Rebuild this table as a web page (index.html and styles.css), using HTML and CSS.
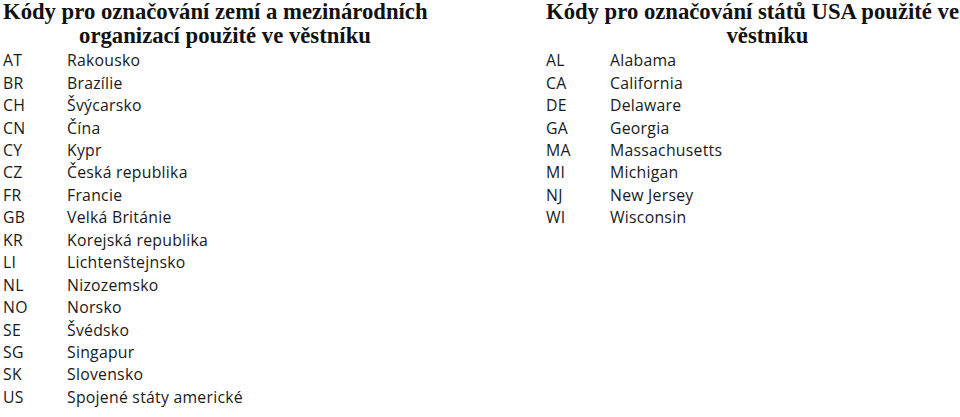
FILE: index.html
```html
<!DOCTYPE html>
<html lang="cs">
<head>
<meta charset="utf-8">
<link rel="stylesheet" href="styles.css">
</head>
<body>
<div class="page">
  <section class="col col-left">
    <h2 class="title">
      <span class="t1">Kódy pro označování zemí a mezinárodních</span>
      <span class="t2">organizací použité ve věstníku</span>
    </h2>
    <ul class="list">
      <li><span class="code">AT</span><span class="name">Rakousko</span></li>
      <li><span class="code">BR</span><span class="name">Brazílie</span></li>
      <li><span class="code">CH</span><span class="name">Švýcarsko</span></li>
      <li><span class="code">CN</span><span class="name">Čína</span></li>
      <li><span class="code">CY</span><span class="name">Kypr</span></li>
      <li><span class="code">CZ</span><span class="name">Česká republika</span></li>
      <li><span class="code">FR</span><span class="name">Francie</span></li>
      <li><span class="code">GB</span><span class="name">Velká Británie</span></li>
      <li><span class="code">KR</span><span class="name">Korejská republika</span></li>
      <li><span class="code">LI</span><span class="name">Lichtenštejnsko</span></li>
      <li><span class="code">NL</span><span class="name">Nizozemsko</span></li>
      <li><span class="code">NO</span><span class="name">Norsko</span></li>
      <li><span class="code">SE</span><span class="name">Švédsko</span></li>
      <li><span class="code">SG</span><span class="name">Singapur</span></li>
      <li><span class="code">SK</span><span class="name">Slovensko</span></li>
      <li><span class="code">US</span><span class="name">Spojené státy americké</span></li>
    </ul>
  </section>
  <section class="col col-right">
    <h2 class="title">
      <span class="t1">Kódy pro označování států USA použité ve</span>
      <span class="t2">věstníku</span>
    </h2>
    <ul class="list">
      <li><span class="code">AL</span><span class="name">Alabama</span></li>
      <li><span class="code">CA</span><span class="name">California</span></li>
      <li><span class="code">DE</span><span class="name">Delaware</span></li>
      <li><span class="code">GA</span><span class="name">Georgia</span></li>
      <li><span class="code">MA</span><span class="name">Massachusetts</span></li>
      <li><span class="code">MI</span><span class="name">Michigan</span></li>
      <li><span class="code">NJ</span><span class="name">New Jersey</span></li>
      <li><span class="code">WI</span><span class="name">Wisconsin</span></li>
    </ul>
  </section>
</div>
</body>
</html>
```
FILE: styles.css
```css
html, body {
  margin: 0;
  padding: 0;
  background: #ffffff;
  color: #141414;
}
.page {
  display: flex;
  width: 960px;
  height: 417px;
  overflow: hidden;
}
.col {
  padding-left: 3px;
  box-sizing: border-box;
}
.col-left {
  width: 543px;
}
.col-right {
  width: 417px;
}
.title {
  margin: 0;
  font-family: "Liberation Serif", "Times New Roman", serif;
  font-weight: bold;
  font-size: 22.7px;
  line-height: 24px;
  color: #111;
}
.title span {
  display: block;
  white-space: nowrap;
}
.col-left .t1 { text-align: left; }
.col-left .t2 { width: 444px; text-align: center; }
.col-right .t1 { width: 413px; text-align: center; }
.col-right .t2 { width: 443px; text-align: center; }
.list {
  list-style: none;
  margin: 1.3px 0 0;
  padding: 0;
  font-family: "Open Sans", Lato, sans-serif;
  font-size: 15.8px;
  letter-spacing: 0.25px;
  line-height: 22.44px;
  color: #1a1a1a;
}
.list li {
  display: flex;
  white-space: nowrap;
}
.code {
  width: 64px;
  flex: none;
}
```
